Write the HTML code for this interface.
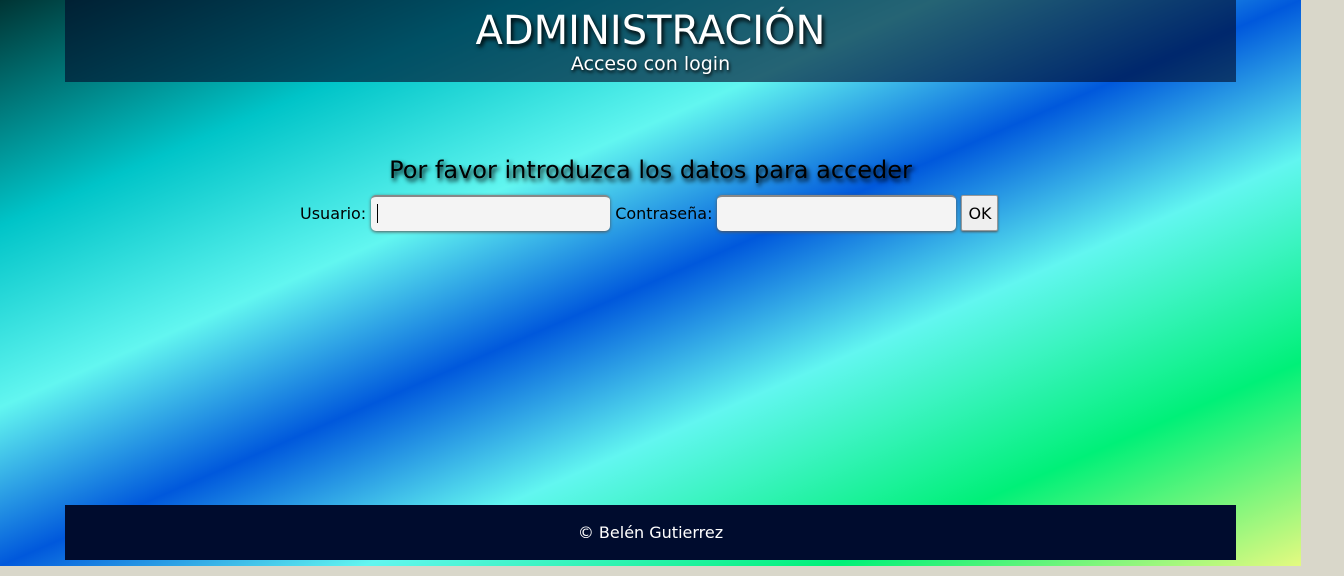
<!DOCTYPE html>
<html><head><meta charset="utf-8"><style>
html,body{margin:0;padding:0}
html{background:#d9d7ca;width:1344px;height:576px;overflow:hidden}
body{width:1301px;height:566px;position:relative;font-family:"DejaVu Sans","Liberation Sans",sans-serif;
background:linear-gradient(to bottom right,#003434 0%,#00c4c8 20%,#62f6f0 36%,#0058dc 50%,#62f6f0 64%,#00f078 82%,#e4fa80 100%);}
.hdr{position:absolute;left:65px;top:0;width:1171px;height:82px;background:rgba(0,10,40,0.62);text-align:center;color:#fff}
.hdr h1{margin:0;padding-top:8px;font-weight:normal;font-size:40px;line-height:46px;text-shadow:2px 3px 4px #000}
.hdr p{margin:0;font-size:19px;line-height:20px;text-shadow:1px 2px 3px #000}
.msg{position:absolute;left:0;width:1301px;top:156px;text-align:center;font-size:24px;color:#000;text-shadow:2px 3px 5px #000}
.form{position:absolute;top:195px;left:300px;font-size:16px;color:#000;display:flex;align-items:center}
.inp{width:239px;height:36px;background:#f4f4f4;border-radius:5px;box-shadow:0 1px 3px #555;border-top:2px solid #888;box-sizing:border-box;margin:0 5px 0 5px;position:relative}
.ok{width:37px;height:36px;background:#efefef;border:1px solid #999;box-sizing:border-box;border-radius:2px;display:flex;align-items:center;justify-content:center;font-size:16px;box-shadow:0 1px 2px #555}
.ftr{position:absolute;left:65px;top:505px;width:1171px;height:55px;background:#000c2e;color:#fff;text-align:center;font-size:16px;line-height:55px}
</style></head><body>
<div class="hdr"><h1>ADMINISTRACIÓN</h1><p>Acceso con login</p></div>
<div class="msg">Por favor introduzca los datos para acceder</div>
<div class="form">Usuario:<div class="inp"><span style="position:absolute;left:6px;top:7px;width:1px;height:19px;background:#000"></span></div>Contraseña:<div class="inp"></div><div class="ok">OK</div></div>
<div class="ftr">© Belén Gutierrez</div>
</body></html>
